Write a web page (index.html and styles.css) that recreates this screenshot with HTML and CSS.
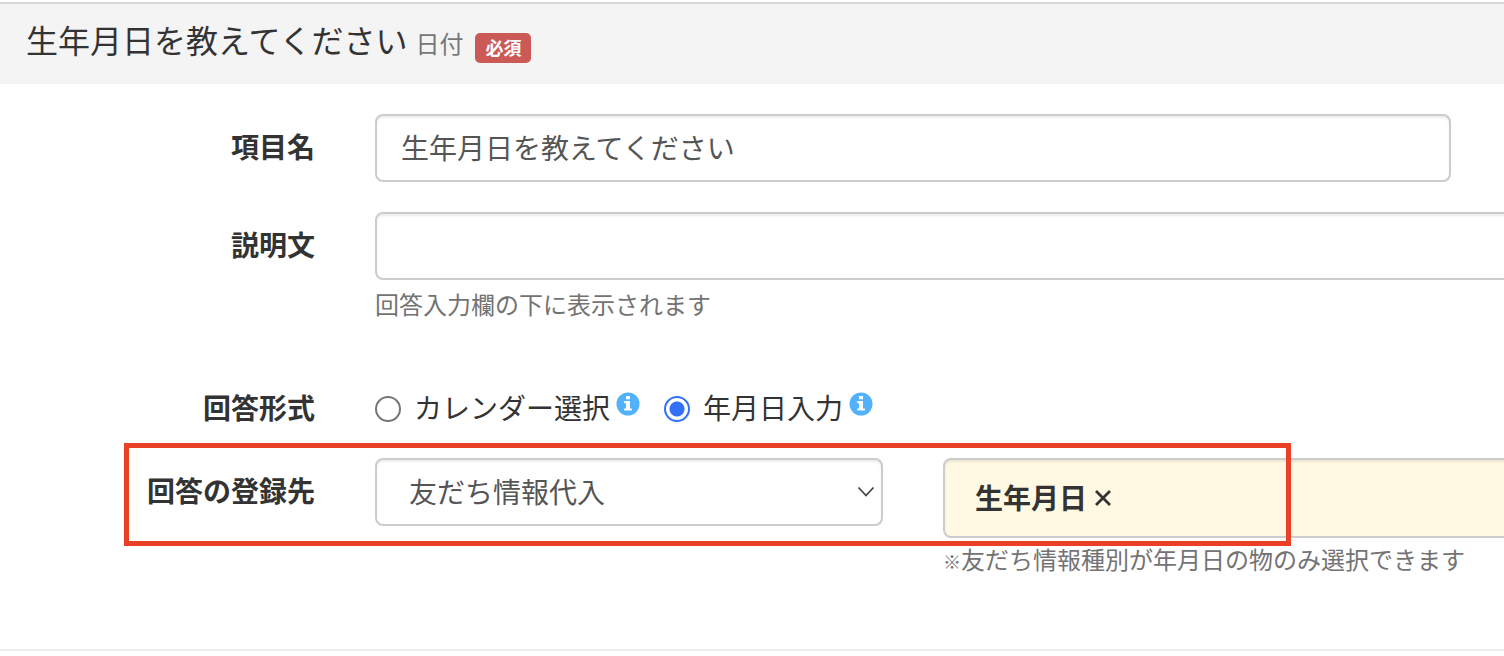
FILE: index.html
```html
<!DOCTYPE html>
<html lang="ja">
<head>
<meta charset="utf-8">
<meta name="viewport" content="width=device-width, initial-scale=1">
<title>生年月日を教えてください</title>
<link rel="stylesheet" href="styles.css">
</head>
<body>
<svg class="sprite" aria-hidden="true">
  <symbol id="info" viewBox="0 0 24 24">
    <circle cx="12" cy="12" r="11.5" fill="#51b2fb"/>
    <path d="M10 4h4v3.2h-4zM8.200 9h5.800v7.400h1.900v2.200H8.200v-2.200H10v-5.200H8.200z" fill="#fff"/>
  </symbol>
</svg>
<section class="question">
  <header class="question-header">
    <h2 class="title">生年月日を教えてください</h2>
    <span class="kind">日付</span>
    <span class="badge">必須</span>
  </header>
  <form class="form">
    <div class="row">
      <label class="label" for="name">項目名</label>
      <div class="field"><input class="control control-inset" id="name" type="text" value="生年月日を教えてください"></div>
    </div>
    <div class="row row-description">
      <label class="label" for="description">説明文</label>
      <div class="field">
        <input class="control control-wide" id="description" type="text">
        <p class="help">回答入力欄の下に表示されます</p>
      </div>
    </div>
    <div class="row row-format" role="radiogroup" aria-labelledby="format-label">
      <span class="label label-format" id="format-label">回答形式</span>
      <div class="field options">
        <div class="option">
          <input class="radio" type="radio" name="format" id="calendar">
          <label for="calendar">カレンダー選択</label>
          <svg class="info" aria-hidden="true"><use href="#info"/></svg>
        </div>
        <div class="option">
          <input class="radio" type="radio" name="format" id="ymd" checked>
          <label for="ymd">年月日入力</label>
          <svg class="info" aria-hidden="true"><use href="#info"/></svg>
        </div>
      </div>
    </div>
    <div class="row row-target">
      <label class="label" for="target">回答の登録先</label>
      <div class="field target">
        <div class="select-wrap">
          <select class="control select" id="target"><option>友だち情報代入</option></select>
          <svg class="chevron" viewBox="0 0 18 12" aria-hidden="true"><path d="M1.500 1.500 9 9.500l7.500-8" fill="none" stroke="#444" stroke-width="1.800"/></svg>
        </div>
        <div class="target-info">
          <div class="tags">
            <span class="tag">生年月日</span>
            <button class="remove" type="button" aria-label="生年月日">
              <svg class="cross" viewBox="0 0 18 18" aria-hidden="true"><path d="M2 2l14 14m0-14l-14 14" stroke="#333" stroke-width="2.800"/></svg>
            </button>
          </div>
          <p class="note"><span class="mark">※</span>友だち情報種別が年月日の物のみ選択できます</p>
        </div>
      </div>
      <div class="highlight"></div>
    </div>
  </form>
</section>
</body>
</html>
```
FILE: styles.css
```css
* { box-sizing: border-box; }
body {
  margin: 0;
  padding-top: 2px;
  overflow: hidden;
  background: #fff;
  color: #333;
  font: 28px/40px "Noto Sans CJK JP", sans-serif;
}
p, h2 { margin: 0; }
.sprite { position: absolute; width: 0; height: 0; }
.question { border-bottom: 2px solid #eee; }
.question-header {
  display: flex;
  align-items: baseline;
  padding: 12px 26px 21px;
  border-top: 2px solid #d9d9d9;
  background: #f4f4f4;
}
.title { font-size: 32px; font-weight: 400; line-height: 46px; }
.kind { margin-left: 8px; color: #777; font-size: 24px; }
.badge {
  align-self: flex-end;
  margin-left: 12px;
  padding: 0 10px 2px;
  border-radius: 5px;
  background: #cb5a56;
  color: #fff;
  font-size: 18px;
  font-weight: 700;
  line-height: 28px;
}
.form { padding: 30px 0 72px; }
.row { display: flex; align-items: flex-start; gap: 60px; position: relative; }
.label { flex: 0 0 315px; padding-top: 12px; text-align: right; font-weight: 700; }
.field { flex: 1; min-width: 0; display: flex; flex-direction: column; }
.control {
  height: 68px;
  padding: 0 24px 2px;
  border: 2px solid #ccc;
  border-radius: 8px;
  background: #fff;
  box-shadow: inset 0 2px 2px rgba(0, 0, 0, .075);
  color: #555;
  font: inherit;
}
.control-inset { margin-right: 53px; }
.control-wide { margin-right: -20px; }
.row-description { margin-top: 30px; }
.help, .note { color: #737373; font-size: 24px; line-height: 32px; }
.help { margin-top: 8px; }
.row-format { margin-top: 67px; }
.label-format { padding-top: 0; }
.field.options { flex-direction: row; gap: 24px; }
.option { display: flex; align-items: center; }
.radio {
  appearance: none;
  width: 26px;
  height: 26px;
  margin: 4px 13px 0 0;
  border: 2px solid #767676;
  border-radius: 50%;
  background: #fff;
}
.radio:checked {
  border-color: #3371f8;
  background: radial-gradient(circle, #3371f8 7px, #fff 8px);
}
.info { width: 24px; height: 24px; margin: 0 0 6px 6px; }
.row-target { margin-top: 31px; }
.field.target { flex-direction: row; gap: 60px; }
.select-wrap { flex: 0 0 508px; position: relative; }
.select { width: 100%; padding: 0 32px 2px; appearance: none; }
.chevron { position: absolute; right: 8px; top: 28px; width: 18px; height: 12px; pointer-events: none; }
.target-info { flex: 1; min-width: 0; white-space: nowrap; }
.tags {
  display: flex;
  align-items: center;
  height: 80px;
  margin-right: -20px;
  padding: 0 30px 2px;
  border: 2px solid #ccc;
  border-radius: 8px;
  background: #fff9e3;
  box-shadow: inset 0 2px 2px rgba(0, 0, 0, .075);
  font-weight: 700;
}
.remove { display: flex; margin: 2px 0 0 7px; padding: 0; border: 0; background: none; }
.cross { width: 18px; height: 18px; }
.note { margin-top: 5px; }
.mark { font-size: 18px; }
.highlight {
  position: absolute;
  top: -15px;
  left: 124px;
  width: 1167px;
  height: 103px;
  border: 5px solid #ea4025;
  pointer-events: none;
}
```
